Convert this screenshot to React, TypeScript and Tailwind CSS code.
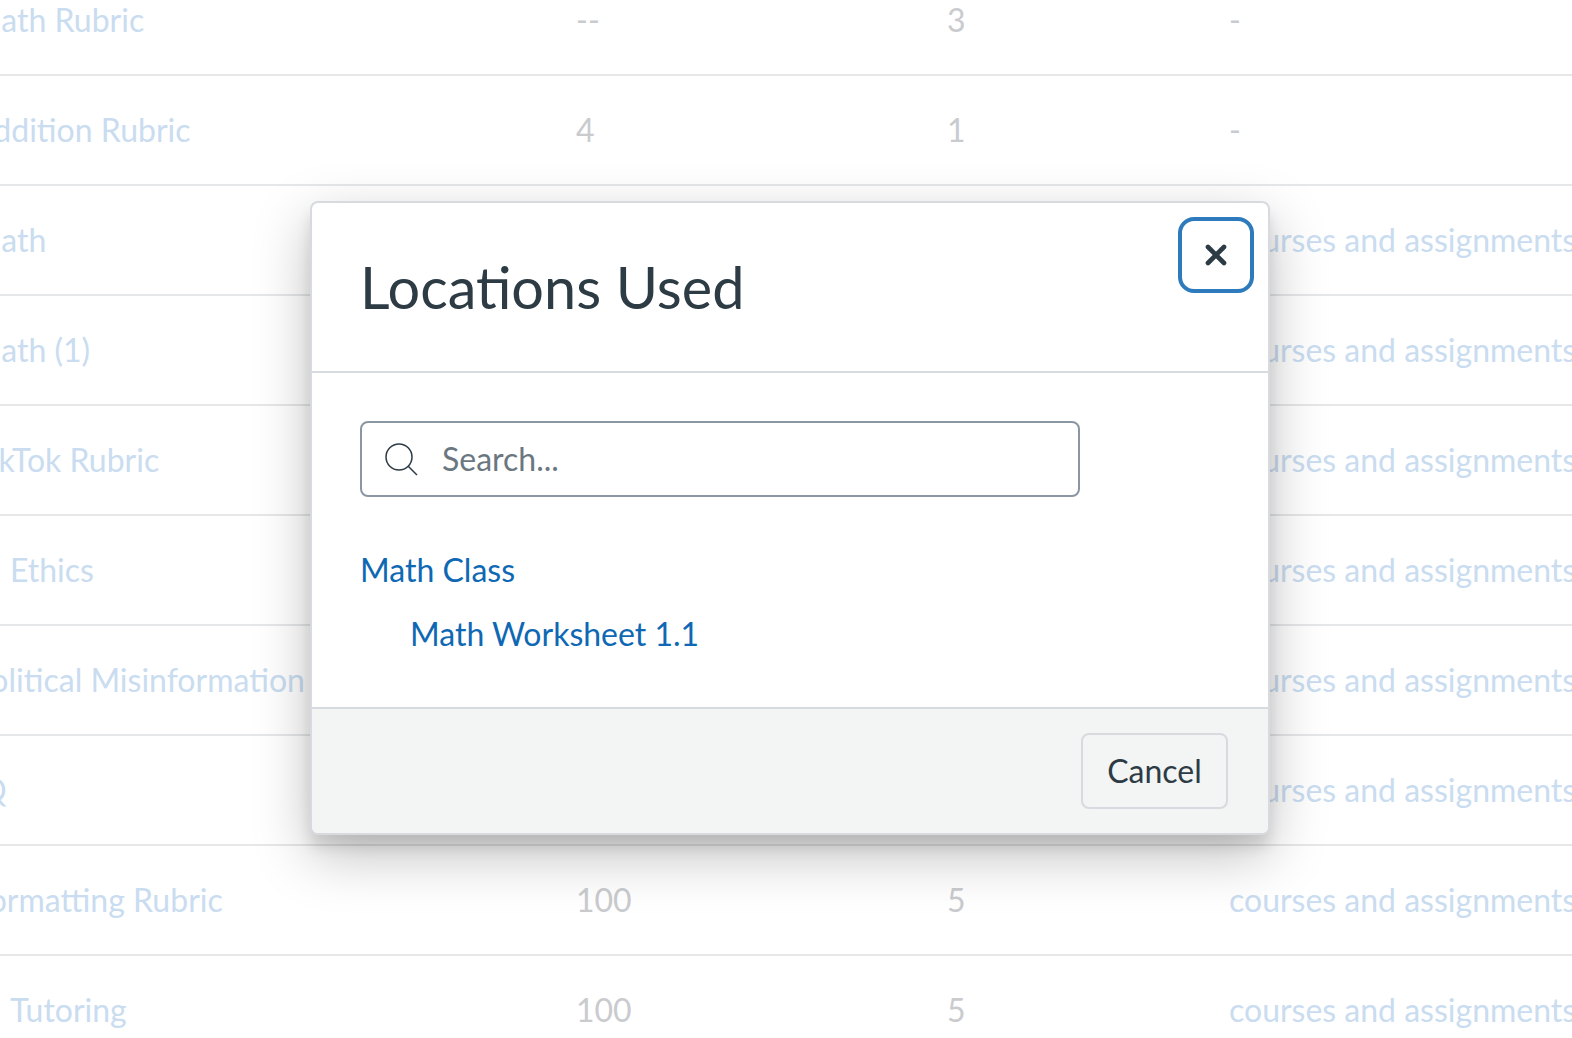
import React from 'react'
import { X } from 'lucide-react'

const rows = [
  { name: 'Math Rubric', indent: '', points: '--', criteria: '3', used: '-' },
  { name: 'Addition Rubric', indent: '', points: '4', criteria: '1', used: '-' },
  { name: 'Math', indent: '', points: '', criteria: '', used: 'courses and assignments' },
  { name: 'Math (1)', indent: '', points: '', criteria: '', used: 'courses and assignments' },
  { name: 'TikTok Rubric', indent: '', points: '', criteria: '', used: 'courses and assignments' },
  { name: 'Ethics', indent: 'pl-[38px]', points: '', criteria: '', used: 'courses and assignments' },
  { name: 'Political Misinformation', indent: '', points: '', criteria: '', used: 'courses and assignments' },
  { name: 'IQ', indent: '', points: '', criteria: '', used: 'courses and assignments' },
  { name: 'Formatting Rubric', indent: '', points: '100', criteria: '5', used: 'courses and assignments' },
  { name: 'Tutoring', indent: 'pl-[38px]', points: '100', criteria: '5', used: 'courses and assignments' },
]

export default function App() {
  return (
    <div className="relative h-[1038px] w-[1572px] overflow-hidden bg-white font-['Lato',sans-serif] text-[32px]">
      {/* Table behind the modal */}
      <div className="-mt-[34px] -ml-[28px] w-[1600px]">
        {rows.map((row) => (
          <div key={row.name} className="flex h-[110px] items-center border-b-2 border-[#e6e7e9] whitespace-nowrap">
            <div className={`w-[604px] shrink-0 text-[#c9dcf0] ${row.indent}`}>{row.name}</div>
            <div className="w-[371px] shrink-0 text-[#c9cbce]">{row.points}</div>
            <div className="w-[282px] shrink-0 text-[#c9cbce]">{row.criteria}</div>
            <div className={row.used === '-' ? 'shrink-0 text-[#c9cbce]' : 'shrink-0 text-[#c9dcf0]'}>{row.used}</div>
          </div>
        ))}
      </div>

      {/* Modal */}
      <div className="absolute top-[201px] left-[310px] flex h-[634px] w-[960px] flex-col overflow-hidden rounded-lg border-2 border-[#d7dade] bg-white shadow-[0_12px_14px_rgba(0,0,0,0.1),0_20px_56px_rgba(0,0,0,0.25)]">
        <div className="relative h-[170px] shrink-0 border-b-2 border-[#d7dade] px-12 pt-[49px]">
          <h2 className="text-[57.6px] leading-[70px] font-normal text-[#2d3b45]">Locations Used</h2>
          <button className="absolute top-[14px] right-[14px] flex h-[76px] w-[76px] items-center justify-center rounded-2xl border-4 border-[#2d7bbd] text-[#2d3b45]">
            <X size={32} strokeWidth={3.5} />
          </button>
        </div>

        <div className="flex-1 px-12 pt-12">
          <div className="flex h-[76px] w-[720px] items-center gap-[24px] rounded-lg border-2 border-[#8b96a3] pl-[22px]">
            <svg width="34" height="34" viewBox="0 0 34 34" fill="none" stroke="#2d3b45" strokeWidth="1.5">
              <circle cx="15" cy="15" r="13" />
              <path d="M24 24l9 9" />
            </svg>
            <span className="text-[#6b7780]">Search...</span>
          </div>
          <div className="mt-[53px] leading-[40px] text-[#0e68b3]">Math Class</div>
          <div className="mt-[24px] ml-[50px] leading-[40px] text-[#0e68b3]">Math Worksheet 1.1</div>
        </div>

        <div className="flex h-[126px] shrink-0 items-center justify-end border-t-2 border-[#d7dade] bg-[#f3f4f4] pr-[40px]">
          <button className="flex h-[76px] w-[147px] items-center justify-center rounded-lg border-2 border-[#d7dade] text-[#2d3b45]">
            Cancel
          </button>
        </div>
      </div>
    </div>
  )
}
